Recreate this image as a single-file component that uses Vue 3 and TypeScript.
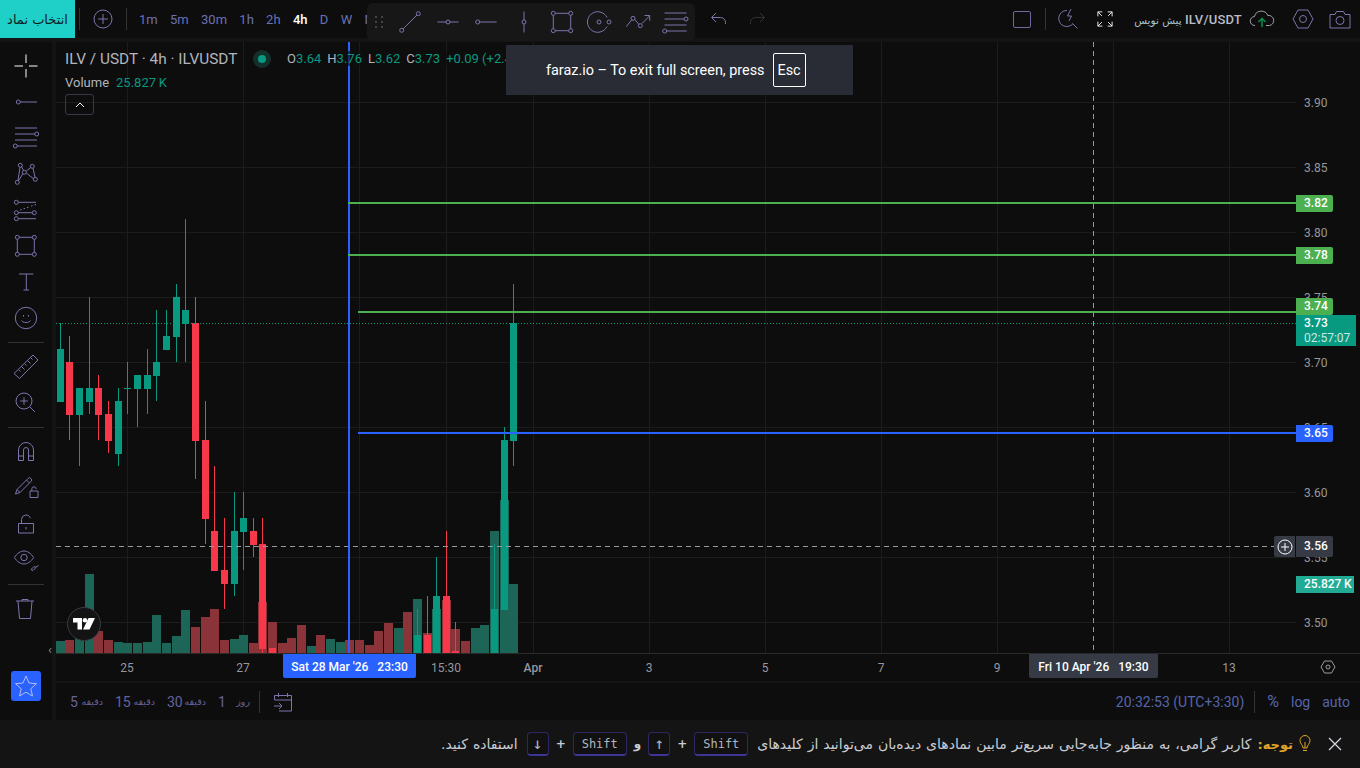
<script setup lang="ts">
// icon = lines + small circles, all in a 28x28 box
type Icon = { d: string; dots?: number[][]; dim?: boolean }

const sideTop: Icon[] = [
  { d: 'M2.5 14h8.500M17 14h8.500M14 2.500v8.500M14 17v8.500' },
  { d: 'M8.300 14H25', dots: [[6.300, 14]] },
  { d: 'M3 4h22M3 10h19.700M3 16h22M5.300 22H25', dots: [[24.700, 10], [3.300, 22]] },
  { d: 'M6 20.500 8 7.300M9.500 6.500 11.500 10.500M6.500 20.700 10.800 13.800M14.300 11 18.700 7.500M21 8.200 23 17.300M14.300 13 21.300 18.700', dots: [[8.300, 5.300], [20.300, 6.300], [12.300, 12.300], [5.300, 22.300], [23.300, 19.300]] },
  { d: 'M6.300 6.300H24M6.300 16.700H20.300M6.300 22.700H24M8 14l1.500-.5M11.500 12.800l1.500-.5M15 11.600l1.500-.5M19 10.200l1.500-.5M22.500 9l1.500-.5', dots: [[4.300, 6.300], [4.300, 16.700], [22.300, 16.700], [4.300, 22.700]] },
  { d: 'M7.300 5.300h13M7.300 22.300h13M5.300 7.300v13M22.300 7.300v13', dots: [[5.300, 5.300], [22.300, 5.300], [5.300, 22.300], [22.300, 22.300]] },
  { d: 'M7 6h14.500M14.300 6v16M11.500 22h5.600' },
  { d: 'M24.700 14a10.700 10.700 0 1 1-21.400 0 10.700 10.700 0 0 1 21.400 0zM9.500 16.500c1.200 2.700 7.800 2.700 9 0M11.500 11v1.600M16.500 11v1.600' },
]
const sideMid: Icon[] = [
  { d: 'M7.500 25.500 26 7l-5-5L2 20.500zM6.500 16.500l2 2M9.500 13.500l3 3M12.500 10.500l2 2M15.500 7.500l3 3M18.500 4.500l2 2' },
  { d: 'M12 4a8 8 0 1 0 0 16 8 8 0 0 0 0-16zM17.700 17.700l5.300 5.300M12 8.200v7.600M8.200 12h7.600' },
]
const sideBot: Icon[] = [
  { d: 'M6.500 22.500V12a7.500 7.500 0 0 1 15 0v10.500h-5V12a2.500 2.500 0 0 0-5 0v10.500zM6.500 18h5M16.500 18h5' },
  { d: 'M3.500 20 5 15.500 16 4.500a2 2 0 0 1 3 0 2 2 0 0 1 0 3L8 18.500zM5 15.500l3 3M14.500 6l3 3M18 17h8v6.500h-8zM19.800 17v-2a2.200 2.200 0 0 1 4.400 0' },
  { d: 'M6.500 13.500h15V23h-15zM9.500 13.500V9.500a4.500 4.500 0 0 1 8.800-1.300M14 17v2.500' },
  { d: 'M2.500 11.500C5 7 9 5 12 5s7 2 9.500 6.500C19 16 15 18 12 18s-7-2-9.500-6.500zM12 8.300a3.200 3.200 0 1 0 0 6.400 3.200 3.200 0 0 0 0-6.400zM19 23.500l3-3 2 1-3 3zM24 21l2.500-1.500' },
]
const sideLast: Icon = { d: 'M4 6h18M10 6V4.500h6V6M6 6l1.500 17.500h11L20 6' }

const floating: Icon[] = [
  { d: 'M7.200 20.800 20.800 7.200', dots: [[5.700, 22.300], [22.300, 5.700]] },
  { d: 'M3.500 14H12M16 14h8.500', dots: [[14, 14]] },
  { d: 'M7.700 14h17', dots: [[5.700, 14]] },
  { d: 'M14 3.500V12M14 16v8.500', dots: [[14, 14]] },
  { d: 'M7.300 5.300h13.400M7.300 22.700h13.400M5.300 7.300v13.400M22.700 7.300v13.400', dots: [[5.300, 5.300], [22.700, 5.300], [5.300, 22.700], [22.700, 22.700]] },
  { d: 'M21 9.500A10.300 10.300 0 1 0 21 18.500M21 9.500', dots: [[13, 14], [23, 14]] },
  { d: 'M2.300 18.700 7.800 11.700M10.300 11 15 16.500M18 15.500l7.500-7.500M20.500 7.500h5.200v5.200', dots: [[9, 10.300], [16.300, 17.700]] },
  { d: 'M2.500 5h22M2.500 11H22M2.500 17h22M4.700 23h20', dots: [[24, 11], [2.700, 23]] },
]

const frames = ['1m', '5m', '30m', '1h', '2h', '4h', 'D', 'W', 'M']
const ranges = [
  { n: '5', unit: 'دقیقه', w: 33 },
  { n: '15', unit: 'دقیقه', w: 40 },
  { n: '30', unit: 'دقیقه', w: 39 },
  { n: '1', unit: 'روز', w: 32 },
]

// index, up, wick top, wick bottom, body top, body bottom (page pixels)
const candleRows: [number, number, number, number, number, number][] = [
  [0, 1, 323, 402, 349, 402], [1, 0, 336, 440, 362, 415], [2, 1, 388, 466, 388, 415],
  [3, 1, 297, 414, 388, 402], [4, 0, 375, 440, 388, 415], [5, 0, 401, 453, 414, 441],
  [6, 1, 388, 466, 401, 454], [7, 1, 362, 414, 388, 389], [8, 1, 375, 427, 375, 389],
  [9, 1, 349, 414, 375, 389], [10, 1, 310, 401, 362, 376], [11, 1, 310, 350, 336, 350],
  [12, 1, 284, 362, 297, 337], [13, 1, 219, 362, 310, 324], [14, 0, 297, 479, 323, 441],
  [15, 0, 401, 544, 440, 519], [16, 0, 466, 571, 531, 571], [17, 0, 518, 609, 570, 584],
  [18, 1, 492, 596, 531, 584], [19, 1, 492, 570, 518, 532], [20, 0, 518, 557, 531, 545],
  [21, 0, 518, 653, 544, 649], [22, 0, 648, 653, 648, 653], [37, 1, 609, 653, 635, 653],
  [38, 0, 596, 653, 635, 653], [39, 1, 557, 653, 596, 653], [40, 0, 531, 653, 596, 653],
  [41, 0, 622, 653, 651, 653], [45, 1, 544, 653, 609, 653], [46, 1, 427, 610, 440, 610],
  [47, 1, 284, 466, 323, 441],
]
const centerOf = (i: number) => Math.floor(60.3 + i * 9.65)
const candles = candleRows.map(([i, up, wt, wb, bt, bb]) => ({
  cx: centerOf(i), color: up ? '#089981' : '#f7374a', wt, wb, bt, bb,
}))

// top of each volume bar, g = green, r = red
const volumeTops = 'g641 r640 g638 g574 r631 r640 g642 g643 g643 g642 g615 g643 g636 g610 r627 r617 r609 r640 g639 g635 r643 r602 r622 r643 r638 r625 g646 r635 g639 g642 r640 r640 r645 r631 r623 g628 r612 g599 r633 g609 r600 r629 r641 g628 g625 g531 g500 g584'
const volumes = volumeTops.split(' ').map((v, i) => ({
  x: centerOf(i) - 4,
  top: Number(v.slice(1)),
  color: v[0] === 'g' ? '#1d6556' : '#8a3339',
}))

const gridX = [127, 243, 359, 446, 533, 649, 765, 881, 997, 1113, 1229]
const ticks = [
  { t: '3.90', y: 102 }, { t: '3.85', y: 167 }, { t: '3.80', y: 232 }, { t: '3.75', y: 297 },
  { t: '3.70', y: 362 }, { t: '3.65', y: 427 }, { t: '3.60', y: 492 }, { t: '3.55', y: 557 }, { t: '3.50', y: 622 },
]
const greenLines = [
  { y: 202, x: 348 }, { y: 254, x: 348 }, { y: 311, x: 358 },
]
const tags = [
  { t: '3.82', y: 195, c: '#4caf50' }, { t: '3.78', y: 247, c: '#4caf50' },
  { t: '3.74', y: 298, c: '#4caf50' }, { t: '3.65', y: 425, c: '#2962ff' },
]
const dateTicks = [
  { t: '25', x: 127 }, { t: '27', x: 243 }, { t: '15:30', x: 446 }, { t: 'Apr', x: 533, strong: true },
  { t: '3', x: 649 }, { t: '5', x: 765 }, { t: '7', x: 881 }, { t: '9', x: 997 }, { t: '13', x: 1229 },
]
</script>

<template>
  <div class="page">
    <!-- top bar -->
    <header class="topbar">
      <button class="pick" dir="rtl">انتخاب نماد</button>
      <i class="vsep first"></i>
      <svg class="ico plus" viewBox="0 0 20 20"><circle cx="10" cy="10" r="9" /><path d="M10 5v10M5 10h10" /></svg>
      <i class="vsep"></i>
      <div class="frames">
        <span v-for="f in frames" :key="f" :class="{ on: f === '4h' }">{{ f }}</span>
      </div>
      <svg class="ico undo" width="20" height="20" viewBox="0 0 20 20"><path d="M7 4 2.500 8.500 7 13M3 8.500h8.500a5 5 0 0 1 5 5V15" /></svg>
      <svg class="ico redo" width="20" height="20" viewBox="0 0 20 20"><path d="M13 4l4.500 4.500L13 13M17 8.500H8.500a5 5 0 0 0-5 5V15" /></svg>

      <div class="top-right">
        <i class="square"></i>
        <i class="vsep"></i>
        <svg class="ico" width="22" height="24" viewBox="0 0 22 24" style="margin-left:11px"><path d="M10 3.500a8 8 0 1 0 6 13M15.500 16.500l5 5M14 2l-3.500 7h4L12 14" /></svg>
        <svg class="ico white" width="16" height="16" viewBox="0 0 18 18" style="margin-left:18px"><path d="M1 6V1h5M12 1h5v5M17 12v5h-5M6 17H1v-5M1 1l4.500 4.500M17 1l-4.500 4.500M17 17l-4.500-4.500M1 17l4.500-4.500" /></svg>
        <div class="draft"><span dir="rtl" class="fa">پیش نویس</span> ILV/USDT</div>
        <svg class="ico cloud" width="26" height="18" viewBox="0 0 26 18">
          <path d="M6 15.500a4.500 4.500 0 0 1-.5-9A7 7 0 0 1 18.800 5.500 5 5 0 0 1 20.500 15.500H17" />
          <path class="up" d="M13 17V9M9.500 12 13 8.500l3.500 3.500" />
        </svg>
        <svg class="ico" width="22" height="20" viewBox="0 0 22 20" style="margin-left:17px"><path d="M1 10 6 1h10l5 9-5 9H6z" /><circle cx="11" cy="10" r="3.500" /></svg>
        <svg class="ico" width="22" height="19" viewBox="0 0 22 19" style="margin-left:15px"><path d="M1 4.500h5L7.500 1.500h7L16 4.500h5V18H1z" /><circle cx="11" cy="10.500" r="4" /></svg>
      </div>

      <!-- floating drawing toolbar -->
      <div class="floatbar">
        <div class="grip"><i v-for="n in 6" :key="n"></i></div>
        <svg v-for="(ic, n) in floating" :key="n" class="ico tool" width="28" height="28" viewBox="0 0 28 28">
          <path :d="ic.d" />
          <circle v-for="(c, k) in ic.dots" :key="k" :cx="c[0]" :cy="c[1]" r="2" />
        </svg>
      </div>
    </header>

    <div class="main">
      <!-- left tools -->
      <aside class="side">
        <div class="tools">
          <svg v-for="(ic, n) in sideTop" :key="n" class="ico slot" :class="{ white: n === 0 }" width="28" height="28" viewBox="0 0 28 28">
            <path :d="ic.d" />
            <circle v-for="(c, k) in ic.dots" :key="k" :cx="c[0]" :cy="c[1]" r="2" />
          </svg>
          <i class="hsep"></i>
          <svg v-for="(ic, n) in sideMid" :key="n" class="ico slot" width="28" height="28" viewBox="0 0 28 28"><path :d="ic.d" /></svg>
          <i class="hsep"></i>
          <svg v-for="(ic, n) in sideBot" :key="n" class="ico slot" width="28" height="28" viewBox="0 0 28 28"><path :d="ic.d" /></svg>
          <i class="hsep"></i>
          <svg class="ico slot" width="28" height="28" viewBox="0 0 28 28"><path :d="sideLast.d" /></svg>
        </div>
        <button class="star">
          <svg class="ico" width="24" height="24" viewBox="0 0 24 24"><path d="M12 2l3 7 7.500.7-5.700 5 1.700 7.300L12 18.200 5.500 22l1.700-7.300-5.700-5L9 9z" /></svg>
        </button>
      </aside>

      <div class="content">
        <section class="chart">
          <div class="pane">
            <svg class="plot" width="1304" height="611" viewBox="56 42 1304 611" shape-rendering="crispEdges">
              <rect v-for="x in gridX" :key="x" :x="x" y="42" width="1" height="611" fill="#1c1c1c" />
              <rect v-for="t in ticks" :key="t.t" x="56" :y="t.y" width="1240" height="1" fill="#1c1c1c" />
              <rect v-for="v in volumes" :key="v.x" :x="v.x" :y="v.top" width="9" :height="653 - v.top" :fill="v.color" />
              <g v-for="c in candles" :key="c.cx">
                <rect :x="c.cx" :y="c.wt" width="1" :height="c.wb - c.wt" :fill="c.color" />
                <rect :x="c.cx - 3" :y="c.bt" width="7" :height="c.bb - c.bt" :fill="c.color" />
              </g>
              <line x1="56" y1="323.500" x2="1296" y2="323.500" stroke="#089981" stroke-dasharray="1 2" />
              <line x1="56" y1="546.500" x2="1274" y2="546.500" stroke="#9598a1" stroke-dasharray="5 4" />
              <line x1="1093.500" y1="42" x2="1093.500" y2="653" stroke="#9598a1" stroke-dasharray="5 4" />
              <rect x="348" y="42" width="2" height="611" fill="#2962ff" />
              <rect v-for="g in greenLines" :key="g.y" :x="g.x" :y="g.y" :width="1296 - g.x" height="2" fill="#4caf50" />
              <rect x="358" y="432" width="938" height="2" fill="#2962ff" />
            </svg>

            <!-- legend -->
            <div class="legend">
              <div class="row">
                <span class="title">ILV / USDT · 4h · ILVUSDT</span>
                <span class="live"><i></i></span>
                <span class="ohlc">
                  O<b>3.64</b>H<b>3.76</b>L<b>3.62</b>C<b>3.73</b><b>+0.09 (+2.47%)</b>
                </span>
              </div>
              <div class="row vol">Volume <b>25.827&thinsp;K</b></div>
              <button class="fold">
                <svg class="ico white" width="10" height="6" viewBox="0 0 10 6"><path d="M1 5l4-4 4 4" /></svg>
              </button>
            </div>

            <div class="exit">
              <span>faraz.io – To exit full screen, press</span>
              <kbd>Esc</kbd>
            </div>

            <!-- price scale -->
            <span v-for="t in ticks" :key="t.t" class="tick" :style="{ top: t.y - 49 + 'px' }">{{ t.t }}</span>
            <span v-for="t in tags" :key="t.t" class="tag" :style="{ top: t.y - 42 + 'px', background: t.c }">{{ t.t }}</span>
            <div class="last"><span>3.73</span><small>02:57:07</small></div>
            <div class="cross-price">3.56</div>
            <div class="cross-add">
              <svg class="ico white" width="16" height="16" viewBox="0 0 16 16"><circle cx="8" cy="8" r="7" /><path d="M8 4v8M4 8h8" /></svg>
            </div>
            <div class="vol-tag">25.827&thinsp;K</div>

            <!-- logo -->
            <div class="logo">
              <svg width="22" height="12" viewBox="0 0 22 12">
                <path d="M0 0h9v11.500H4.500V4.500H0zM15.500 0h6.500L16.500 11.500H10z" fill="#fff" />
                <circle cx="12" cy="2.300" r="2.300" fill="#fff" />
              </svg>
            </div>
            <span class="side-fold">‹</span>
          </div>

          <div class="dates">
            <span v-for="d in dateTicks" :key="d.t" class="date" :class="{ strong: d.strong }" :style="{ left: d.x - 56 + 'px' }">{{ d.t }}</span>
            <div class="date-tag blue">Sat 28 Mar '26 <em>23:30</em></div>
            <div class="date-tag grey">Fri 10 Apr '26 <em>19:30</em></div>
            <svg class="ico gear" width="16" height="14" viewBox="0 0 16 14"><path d="M1 7l3.500-6h7L15 7l-3.500 6h-7z" /><circle cx="8" cy="7" r="2" /></svg>
          </div>
        </section>

        <footer class="bottom">
          <span v-for="r in ranges" :key="r.n" class="range" :style="{ width: r.w + 'px' }">
            <b>{{ r.n }}</b><span class="fa" dir="rtl">{{ r.unit }}</span>
          </span>
          <i class="vsep low"></i>
          <svg class="ico cal" width="20" height="20" viewBox="0 0 20 20"><path d="M1.500 8V3.500h17V19H6M1.500 8h17M5.500 1v4M14.500 1v4M1 14h8M6 11l3 3-3 3" /></svg>
          <div class="bottom-right">
            <span>20:32:53 (UTC+3:30)</span>
            <i class="vsep low"></i>
            <span class="pct">%</span>
            <span>log</span>
            <span>auto</span>
          </div>
        </footer>
      </div>
    </div>

    <!-- notice -->
    <div class="notice" dir="rtl">
      <svg class="ico close" width="14" height="14" viewBox="0 0 14 14"><path d="M1 1l12 12M13 1 1 13" /></svg>
      <svg class="ico bulb" width="12" height="18" viewBox="0 0 12 18"><path d="M4 13c0-3-3-4-3-7.500a5 5 0 0 1 10 0C11 9 8 10 8 13zM4 15.500h4M6 13V7" /></svg>
      <span class="note-title">توجه:</span>
      <span class="note-text">کاربر گرامی، به منظور جابه‌جایی سریع‌تر مابین نمادهای دیده‌بان می‌توانید از کلیدهای</span>
      <kbd class="key wide">Shift</kbd><span class="sym">+</span><kbd class="key">↑</kbd>
      <span class="sym">و</span>
      <kbd class="key wide">Shift</kbd><span class="sym">+</span><kbd class="key">↓</kbd>
      <span class="note-text">استفاده کنید.</span>
    </div>
  </div>
</template>

<style scoped>
.page {
  width: 1360px;
  height: 768px;
  overflow: hidden;
  display: flex;
  flex-direction: column;
  background: #141414;
  font-family: Roboto, "DejaVu Sans", sans-serif;
  color: #b2b5be;
}
.fa {
  font-family: "DejaVu Sans", Roboto, sans-serif;
}
i {
  display: block;
}
.ico {
  display: block;
  fill: none;
  stroke: #7d74ad;
  stroke-width: 1;
  flex: none;
}
.ico.white {
  stroke: #fff;
}

/* top bar */
.topbar {
  position: relative;
  height: 38px;
  flex: none;
  display: flex;
  align-items: center;
  background: #0d0d0d;
}
.pick {
  width: 75px;
  height: 38px;
  border: 0;
  padding: 0;
  background: #1fd0c8;
  color: #10201f;
  font: 13px "DejaVu Sans", sans-serif;
  white-space: nowrap;
}
.vsep {
  width: 1px;
  height: 22px;
  background: #333;
  flex: none;
}
.vsep.first {
  margin-left: 4px;
}
.plus {
  width: 20px;
  height: 20px;
  margin: 0 13px;
}
.frames {
  display: flex;
  gap: 12.300px;
  margin-left: 12px;
  width: 570px;
  font-size: 13px;
  color: #6a71b5;
}
.frames .on {
  color: #fff;
  font-weight: 500;
}
.undo {
  position: absolute;
  left: 709px;
  top: 9px;
}
.redo {
  position: absolute;
  left: 747px;
  top: 9px;
  stroke: #333;
}
.top-right {
  margin-left: auto;
  display: flex;
  align-items: center;
  padding-right: 9px;
}
.square {
  width: 18px;
  height: 17px;
  box-sizing: border-box;
  border: 1px solid #6f6a9e;
  border-radius: 2px;
  margin-right: 14px;
}
.draft {
  margin-left: 21px;
  font-size: 13px;
  font-weight: 500;
  letter-spacing: 0.200px;
  color: #b9bcc6;
  white-space: nowrap;
}
.draft .fa {
  font-size: 10.500px;
  letter-spacing: 0;
  color: #a9c4d6;
}
.cloud {
  margin-left: 7px;
  stroke: #a0a3ad;
}
.cloud .up {
  stroke: #0b8a4a;
  stroke-width: 1.6;
}
.floatbar {
  position: absolute;
  left: 367px;
  top: 3px;
  width: 328px;
  height: 38px;
  z-index: 5;
  display: flex;
  align-items: center;
  background: #171717;
  border-radius: 6px;
}
.grip {
  width: 24px;
  display: grid;
  grid-template-columns: 2px 2px;
  gap: 3px 4px;
  justify-content: center;
}
.grip i {
  width: 2px;
  height: 2px;
  background: #444;
}
.tool {
  margin: 0 5px;
}

.main {
  flex: 1;
  min-height: 0;
  display: flex;
  gap: 4px;
  margin-top: 4px;
}

/* left tools */
.side {
  width: 52px;
  flex: none;
  display: flex;
  flex-direction: column;
  align-items: center;
  justify-content: space-between;
  background: #0d0d0d;
  padding: 6px 0 19px;
}
.tools {
  display: flex;
  flex-direction: column;
  align-items: center;
}
.slot {
  margin: 4px 0;
}
.hsep {
  width: 36px;
  height: 1px;
  margin: 6px 0 6px;
  background: #333;
}
.star {
  width: 30px;
  height: 30px;
  padding: 0;
  border: 0;
  border-radius: 3px;
  background: #2962ff;
  display: flex;
  align-items: center;
  justify-content: center;
}
.star .ico {
  stroke: #b4bdf0;
}

.content {
  flex: 1;
  min-width: 0;
  display: flex;
  flex-direction: column;
  gap: 2px;
}
.chart {
  flex: 1;
  display: flex;
  flex-direction: column;
  background: #0d0d0d;
}
.pane {
  position: relative;
  height: 611px;
  flex: none;
}
.plot {
  display: block;
}

/* legend */
.legend {
  position: absolute;
  left: 9px;
  top: 6px;
}
.row {
  display: flex;
  align-items: center;
  height: 21px;
  white-space: nowrap;
}
.title {
  font-size: 15.400px;
  width: 188px;
  color: #b2b5be;
}
.live {
  width: 18px;
  height: 18px;
  border-radius: 50%;
  background: #14302b;
  display: flex;
  align-items: center;
  justify-content: center;
  margin-right: 16px;
}
.live i {
  width: 8px;
  height: 8px;
  border-radius: 50%;
  background: #089981;
}
.ohlc {
  font-size: 13px;
  background: rgba(13, 13, 13, 0.6);
  display: flex;
}
.ohlc b {
  margin-right: 6px;
}
.ohlc b,
.vol b {
  font-weight: 400;
  color: #089981;
}
.vol {
  font-size: 13px;
  height: 20px;
  margin-top: 3px;
  gap: 7px;
  color: #b2b5be;
}
.fold {
  width: 29px;
  height: 21px;
  margin-top: 2px;
  padding: 0;
  background: none;
  border: 1px solid #363a45;
  border-radius: 3px;
  display: flex;
  align-items: center;
  justify-content: center;
}

/* browser hint */
.exit {
  position: absolute;
  left: 450px;
  top: 3px;
  width: 347px;
  height: 50px;
  box-sizing: border-box;
  padding-left: 40px;
  display: flex;
  align-items: center;
  gap: 8px;
  background: #292c35;
  color: #fff;
  font-size: 14.400px;
  white-space: nowrap;
}
.exit kbd {
  width: 33px;
  height: 34px;
  box-sizing: border-box;
  border: 1px solid #fff;
  border-radius: 2px;
  display: flex;
  align-items: center;
  justify-content: center;
  font-family: Roboto, sans-serif;
}

/* price scale */
.tick {
  position: absolute;
  left: 1248px;
  height: 16px;
  line-height: 16px;
  font-size: 12px;
  color: #95979e;
}
.tag {
  position: absolute;
  left: 1240px;
  width: 37px;
  height: 17px;
  line-height: 17px;
  box-sizing: border-box;
  padding-left: 8px;
  font-size: 12px;
  font-weight: 500;
  color: #fff;
  border-radius: 0 2px 2px 0;
}
.last {
  position: absolute;
  left: 1240px;
  top: 273px;
  width: 60px;
  height: 31px;
  box-sizing: border-box;
  padding: 1px 0 0 8px;
  background: #089981;
  color: #fff;
  font-size: 12px;
  font-weight: 500;
  line-height: 15px;
}
.last span,
.last small {
  display: block;
}
.last small {
  font-size: 12px;
  font-weight: 400;
  color: #c8e8e2;
}
.cross-price {
  position: absolute;
  left: 1240px;
  top: 494px;
  width: 37px;
  height: 21px;
  box-sizing: border-box;
  padding-left: 8px;
  line-height: 21px;
  background: #363a45;
  color: #fff;
  font-size: 12px;
  font-weight: 500;
  border-radius: 0 2px 2px 0;
}
.cross-add {
  position: absolute;
  left: 1218px;
  top: 494px;
  width: 21px;
  height: 21px;
  background: #363a45;
  border-radius: 2px 0 0 2px;
  display: flex;
  align-items: center;
  justify-content: center;
}
.vol-tag {
  position: absolute;
  left: 1240px;
  top: 534px;
  width: 58px;
  height: 17px;
  box-sizing: border-box;
  padding-left: 8px;
  line-height: 17px;
  background: #22ab94;
  color: #fff;
  font-size: 12px;
  font-weight: 500;
  white-space: nowrap;
}
.logo {
  position: absolute;
  left: 11px;
  top: 565px;
  width: 34px;
  height: 34px;
  box-sizing: border-box;
  border: 1px solid #363a45;
  border-radius: 50%;
  background: #131313;
  display: flex;
  align-items: center;
  justify-content: center;
}
.side-fold {
  position: absolute;
  left: -8px;
  top: 601px;
  font-size: 13px;
  line-height: 14px;
  color: #8a8a8a;
}

/* time scale */
.dates {
  position: relative;
  flex: 1;
  border-top: 1px solid #2a2a2a;
  font-size: 12px;
  color: #95979e;
}
.date {
  position: absolute;
  top: 6px;
  transform: translateX(-50%);
  line-height: 16px;
}
.date.strong {
  font-weight: 500;
}
.date-tag {
  position: absolute;
  top: 0;
  height: 24px;
  line-height: 27px;
  text-align: center;
  color: #fff;
  font-weight: 500;
  white-space: nowrap;
  border-radius: 0 0 2px 2px;
}
.date-tag em {
  font-style: normal;
  margin-left: 6px;
}
.date-tag.blue {
  left: 227px;
  width: 133px;
  background: #2962ff;
}
.date-tag.grey {
  left: 973px;
  width: 129px;
  background: #363a45;
}
.gear {
  position: absolute;
  left: 1264px;
  top: 6px;
  stroke: #9a9ca3;
}

/* bottom bar */
.bottom {
  height: 37px;
  flex: none;
  display: flex;
  align-items: center;
  padding: 0 10px 0 14px;
  background: #0d0d0d;
  font-size: 14px;
  color: #5566ab;
}
.range {
  display: flex;
  align-items: center;
  justify-content: space-between;
  margin-right: 12px;
  font-size: 9.500px;
  color: #65629a;
  white-space: nowrap;
}
.range b {
  font-size: 14px;
  font-weight: 400;
}
.vsep.low {
  margin: 0 13px 0 -3px;
}
.cal {
  stroke: #7d74ad;
}
.bottom-right {
  margin-left: auto;
  display: flex;
  align-items: center;
  gap: 12px;
}
.bottom-right .vsep.low {
  margin: 0 0 0 -2px;
}
.pct {
  font-size: 16px;
}

/* notice */
.notice {
  height: 48px;
  flex: none;
  display: flex;
  align-items: center;
  padding-right: 18px;
  background: #141414;
  font: 14px "DejaVu Sans", sans-serif;
  color: #c9ccd4;
  white-space: nowrap;
}
.close {
  stroke: #d1d4dc;
  stroke-width: 1.3;
}
.bulb {
  margin-right: 17px;
  stroke: #e0a526;
}
.note-title {
  margin-right: 6px;
  font-size: 13px;
  color: #e0a526;
  font-weight: 700;
}
.note-text {
  margin: 0 9px 0 9px;
  word-spacing: 0.500px;
}
.note-title + .note-text {
  margin-right: 6px;
}
.key {
  box-sizing: border-box;
  height: 24px;
  width: 22px;
  display: flex;
  align-items: center;
  justify-content: center;
  background: #111;
  border: 1px solid #2b2960;
  border-bottom: 2px solid #3c3596;
  border-radius: 4px;
  font: 16px "DejaVu Sans Mono", monospace;
  color: #b2b5be;
}
.key.wide {
  width: 54px;
  font-size: 12px;
}
.sym {
  margin: 0 7px;
  font-size: 12px;
  font-weight: 700;
}
</style>

<style>
html,
body {
  background: #141414;
  overflow: hidden;
}
</style>
